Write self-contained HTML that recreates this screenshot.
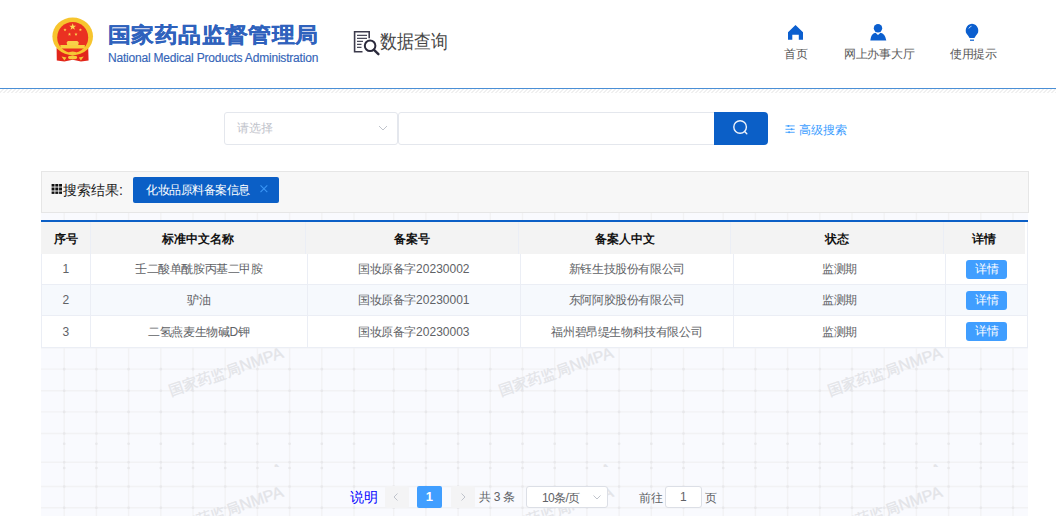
<!DOCTYPE html>
<html><head><meta charset="utf-8">
<style>
*{margin:0;padding:0;box-sizing:border-box;}
html,body{width:1056px;height:516px;overflow:hidden;background:#fff;font-family:"Liberation Sans",sans-serif;}
.abs{position:absolute;}
.t{position:absolute;white-space:nowrap;line-height:1;}
#hdrline{position:absolute;left:0;top:88px;width:1056px;height:1px;background:#4a8fd6;}
#hatch{position:absolute;left:0;top:89px;width:1056px;height:4px;background:repeating-linear-gradient(135deg,#fff 0,#fff 1.5px,#f0f0f0 1.5px,#f0f0f0 2.83px);}
.navtxt{position:absolute;font-size:12px;color:#5a5a5a;letter-spacing:-0.3px;white-space:nowrap;line-height:1;}
.sel{position:absolute;left:224px;top:112px;width:174px;height:33px;border:1px solid #e4e7ed;border-radius:3px;background:#fff;}
.inp{position:absolute;left:398px;top:112px;width:318px;height:33px;border:1px solid #e4e7ed;border-radius:3px 0 0 3px;background:#fff;}
.sbtn{position:absolute;left:714px;top:112px;width:54px;height:33px;background:#0b5fc7;border-radius:0 4px 4px 0;}
#resbar{position:absolute;left:41px;top:171px;width:988px;height:42px;background:#f7f7f7;border:1px solid #e6e6e6;}
.wm{position:absolute;-webkit-text-stroke:0.3px #e3e4e8;white-space:nowrap;line-height:16px;font-size:14.5px;color:#e3e4e8;transform:rotate(-19deg);transform-origin:60px 8px;width:120px;text-align:center;}
.th{position:absolute;top:222px;height:31.5px;line-height:34px;text-align:center;font-size:12px;font-weight:bold;color:#111;white-space:nowrap;}
.td{position:absolute;text-align:center;font-size:12px;line-height:12px;color:#606266;white-space:nowrap;letter-spacing:-0.4px;}
.dbtn{position:absolute;width:41px;height:18.6px;line-height:18.6px;background:#409eff;border-radius:3px;color:#fff;font-size:12px;text-align:center;}

</style></head>
<body>
<!-- emblem -->
<svg class="abs" style="left:48px;top:14px" width="50" height="50" viewBox="0 0 50 50">
  <path d="M8.6 34 L14 36.5 L24.7 40.5 L35.4 36.5 L40.2 34 L40.6 46.6 L33 47.6 L24.7 45.8 L16.4 47.6 L8.8 46.6 Z" fill="#e2261b"/>
  <ellipse cx="24.7" cy="22.4" rx="20.3" ry="18.9" fill="#f7c52e"/>
  <ellipse cx="24.7" cy="23.4" rx="15.5" ry="15.4" fill="#ea3121"/>
  <path d="M18.6 28.6 L19.8 26.9 L29.4 26.9 L30.8 28.6 L30.2 31.1 L19.2 31.1 Z" fill="#f8d04a"/>
  <path d="M12.3 31 L36.9 31 L36.7 34.6 L12.5 34.6 Z" fill="#f8cf3e"/>
  <ellipse cx="24.6" cy="39.3" rx="3.8" ry="1.9" fill="#f5c536"/>
  <ellipse cx="24.6" cy="43.4" rx="4.6" ry="1.9" fill="#f7cb3a"/>
  <path d="M13.5 42.6 L18.5 43.4 L16.4 46.5 Z M35.8 42.6 L30.8 43.4 L32.9 46.5 Z" fill="#f5c536"/>
  <polygon points="24.70,9.20 25.55,11.63 28.12,11.69 26.08,13.25 26.82,15.71 24.70,14.25 22.58,15.71 23.32,13.25 21.28,11.69 23.85,11.63" fill="#fbdc55"/>
  <polygon points="17.00,14.20 17.41,15.33 18.62,15.37 17.67,16.12 18.00,17.28 17.00,16.60 16.00,17.28 16.33,16.12 15.38,15.37 16.59,15.33" fill="#fbd84c"/>
  <polygon points="32.40,14.20 32.81,15.33 34.02,15.37 33.07,16.12 33.40,17.28 32.40,16.60 31.40,17.28 31.73,16.12 30.78,15.37 31.99,15.33" fill="#fbd84c"/>
  <polygon points="21.50,18.60 21.91,19.73 23.12,19.77 22.17,20.52 22.50,21.68 21.50,21.00 20.50,21.68 20.83,20.52 19.88,19.77 21.09,19.73" fill="#fbd84c"/>
  <polygon points="28.00,18.60 28.41,19.73 29.62,19.77 28.67,20.52 29.00,21.68 28.00,21.00 27.00,21.68 27.33,20.52 26.38,19.77 27.59,19.73" fill="#fbd84c"/>
</svg>
<div class="t" style="left:108px;top:25px;font-size:23px;font-weight:bold;-webkit-text-stroke:0.3px #2f62bd;color:#2f62bd;letter-spacing:0.4px;transform:scaleY(0.92);transform-origin:0 0;">国家药品监督管理局</div>
<div class="t" style="left:108px;top:52px;font-size:12px;color:#3565b8;letter-spacing:-0.2px;-webkit-text-stroke:0.15px #3565b8;">National Medical Products Administration</div>

<!-- data query -->
<svg class="abs" style="left:350px;top:26px" width="34" height="34" viewBox="0 0 34 34">
  <path d="M12.5 25.8 L4.6 25.8 L4.6 5.7 L19.2 5.7 L19.2 12.2" fill="none" stroke="#3c3b4c" stroke-width="1.6"/>
  <path d="M7 9.3 H17 M7 12.3 H17 M7 15.3 H13 M7 18.4 H11.5 M7 21.4 H11.5" stroke="#4a4a5a" stroke-width="1.2"/>
  <circle cx="20.1" cy="19.8" r="5.3" fill="none" stroke="#2b2a3c" stroke-width="2"/>
  <path d="M24 23.8 L28.4 28.2" stroke="#2b2a3c" stroke-width="2.4" stroke-linecap="round"/>
</svg>
<div class="t" style="left:380px;top:32px;font-size:19px;color:#444;transform:scaleX(0.89);transform-origin:0 0;">数据查询</div>

<!-- nav -->
<svg class="abs" style="left:786px;top:23px" width="20" height="20" viewBox="0 0 20 20">
  <path d="M2 9.2 L9.5 2 L17 9.2 L17 16.8 L12.8 16.8 L12.8 11.8 L6.3 11.8 L6.3 16.8 L2 16.8 Z" fill="#0b5fcf"/>
</svg>
<div class="navtxt" style="left:784px;top:48px;">首页</div>
<svg class="abs" style="left:868px;top:22px" width="20" height="20" viewBox="0 0 20 20">
  <circle cx="10" cy="6.2" r="4.2" fill="#0b5fcf"/>
  <path d="M2.3 18.4 Q3 11.5 7.5 10.8 L10 13 L12.5 10.8 Q17 11.5 18.3 18.4 Z" fill="#0b5fcf"/>
</svg>
<div class="navtxt" style="left:844px;top:48px;">网上办事大厅</div>
<svg class="abs" style="left:962px;top:21px" width="20" height="22" viewBox="0 0 20 22">
  <path d="M10 2.8 A6.7 6.7 0 0 1 14 14.5 L12.4 17 L7.6 17 L6 14.5 A6.7 6.7 0 0 1 10 2.8 Z" fill="#0b5fcf"/>
  <path d="M8 19.2 H12" stroke="#0b5fcf" stroke-width="1.2"/>
  <path d="M6.8 7.5 A4 4 0 0 1 9.5 5.2" fill="none" stroke="#cfe0f7" stroke-width="0.9"/>
</svg>
<div class="navtxt" style="left:950px;top:48px;">使用提示</div>

<div id="hdrline"></div>
<div id="hatch"></div>

<!-- search -->
<div class="sel"></div>
<div class="t" style="left:237px;top:122px;font-size:12px;color:#bfc3cb;">请选择</div>
<svg class="abs" style="left:377px;top:122px" width="12" height="12" viewBox="0 0 12 12"><path d="M2 4 L6 8 L10 4" fill="none" stroke="#c0c4cc" stroke-width="1"/></svg>
<div class="inp"></div>
<div class="sbtn"></div>
<svg class="abs" style="left:730px;top:117px" width="20" height="20" viewBox="0 0 20 20">
  <circle cx="10.1" cy="10" r="6.3" fill="none" stroke="#eef3fb" stroke-width="1.4"/>
  <path d="M14.6 14.6 L16.8 16.8" stroke="#eef3fb" stroke-width="1.4" stroke-linecap="round"/>
</svg>
<svg class="abs" style="left:785px;top:124px" width="11" height="10" viewBox="0 0 11 10">
  <path d="M0.5 1.9 H9.7 M0.5 5.3 H9.7 M0.5 8.3 H9.7" stroke="#409eff" stroke-width="0.9"/>
  <circle cx="3.4" cy="1.9" r="1" fill="#409eff"/><circle cx="6.6" cy="5.3" r="1" fill="#409eff"/><circle cx="4.1" cy="8.3" r="1" fill="#409eff"/>
</svg>
<div class="t" style="left:799px;top:123.5px;font-size:12px;color:#409eff;">高级搜索</div>

<!-- results bar -->
<div id="resbar"></div>
<svg class="abs" style="left:51px;top:183px" width="12" height="12" viewBox="0 0 12 12"><g fill="#111"><rect x="0.6" y="1" width="2.9" height="2.6"/><rect x="4.3" y="1" width="3" height="2.6"/><rect x="8.1" y="1" width="2.9" height="2.6"/><rect x="0.6" y="4.5" width="2.9" height="3"/><rect x="4.3" y="4.5" width="3" height="3"/><rect x="8.1" y="4.5" width="2.9" height="3"/><rect x="0.6" y="8.5" width="2.9" height="2.4"/><rect x="4.3" y="8.5" width="3" height="2.4"/><rect x="8.1" y="8.5" width="2.9" height="2.4"/></g></svg>
<div class="t" style="left:63px;top:183px;font-size:14px;color:#222;">搜索结果:</div>
<div class="abs" style="left:133px;top:177px;width:146px;height:26px;background:#0b5fc6;border-radius:2px;"></div>
<div class="t" style="left:146px;top:184px;font-size:12px;color:#fff;letter-spacing:-0.45px;">化妆品原料备案信息</div>
<svg class="abs" style="left:259px;top:184px" width="10" height="10" viewBox="0 0 10 10"><path d="M1.5 1.3 L8.3 8.1 M8.3 1.3 L1.5 8.1" stroke="#3a95f5" stroke-width="1.1"/></svg>

<div class="abs" style="left:41px;top:213px;width:987px;height:303px;background:#f9fafe;"></div>
<svg class="abs" style="left:41px;top:213px" width="987" height="303" viewBox="0 1 987 303"><g stroke="#f2f2f4" stroke-width="1.4"><path d="M23.2 0V304"/><path d="M55.4 0V304"/><path d="M87.6 0V304"/><path d="M119.8 0V304"/><path d="M152.0 0V304"/><path d="M184.2 0V304"/><path d="M216.4 0V304"/><path d="M248.6 0V304"/><path d="M280.8 0V304"/><path d="M313.0 0V304"/><path d="M352.7 0V304"/><path d="M384.9 0V304"/><path d="M417.1 0V304"/><path d="M449.3 0V304"/><path d="M481.5 0V304"/><path d="M513.7 0V304"/><path d="M545.9 0V304"/><path d="M578.1 0V304"/><path d="M610.3 0V304"/><path d="M642.5 0V304"/><path d="M682.2 0V304"/><path d="M714.4 0V304"/><path d="M746.6 0V304"/><path d="M778.8 0V304"/><path d="M811.0 0V304"/><path d="M843.2 0V304"/><path d="M875.4 0V304"/><path d="M907.6 0V304"/><path d="M939.8 0V304"/><path d="M972.0 0V304"/><path d="M0 18.5H987"/><path d="M0 40.1H987"/><path d="M0 61.3H987"/><path d="M0 82.9H987"/><path d="M0 111.7H987"/><path d="M0 135.9H987"/><path d="M0 157.1H987"/><path d="M0 178.7H987"/><path d="M0 199.9H987"/><path d="M0 221.5H987"/><path d="M0 250.3H987"/><path d="M0 274.5H987"/><path d="M0 295.7H987"/></g><g fill="#e8e8eb"><rect x="21.9" y="17.2" width="2.6" height="2.6" rx="1"/><rect x="21.9" y="38.8" width="2.6" height="2.6" rx="1"/><rect x="21.9" y="60.0" width="2.6" height="2.6" rx="1"/><rect x="21.9" y="81.6" width="2.6" height="2.6" rx="1"/><rect x="21.9" y="110.4" width="2.6" height="2.6" rx="1"/><rect x="21.9" y="155.8" width="2.6" height="2.6" rx="1"/><rect x="21.9" y="177.4" width="2.6" height="2.6" rx="1"/><rect x="21.9" y="198.6" width="2.6" height="2.6" rx="1"/><rect x="21.9" y="220.2" width="2.6" height="2.6" rx="1"/><rect x="21.9" y="249.0" width="2.6" height="2.6" rx="1"/><rect x="21.9" y="273.2" width="2.6" height="2.6" rx="1"/><rect x="21.9" y="294.4" width="2.6" height="2.6" rx="1"/><rect x="21.9" y="230.5" width="2.6" height="2.6" rx="1"/><rect x="21.9" y="254.7" width="2.6" height="2.6" rx="1"/><rect x="54.1" y="17.2" width="2.6" height="2.6" rx="1"/><rect x="54.1" y="38.8" width="2.6" height="2.6" rx="1"/><rect x="54.1" y="60.0" width="2.6" height="2.6" rx="1"/><rect x="54.1" y="81.6" width="2.6" height="2.6" rx="1"/><rect x="54.1" y="110.4" width="2.6" height="2.6" rx="1"/><rect x="54.1" y="155.8" width="2.6" height="2.6" rx="1"/><rect x="54.1" y="177.4" width="2.6" height="2.6" rx="1"/><rect x="54.1" y="198.6" width="2.6" height="2.6" rx="1"/><rect x="54.1" y="220.2" width="2.6" height="2.6" rx="1"/><rect x="54.1" y="249.0" width="2.6" height="2.6" rx="1"/><rect x="54.1" y="273.2" width="2.6" height="2.6" rx="1"/><rect x="54.1" y="294.4" width="2.6" height="2.6" rx="1"/><rect x="54.1" y="230.5" width="2.6" height="2.6" rx="1"/><rect x="54.1" y="254.7" width="2.6" height="2.6" rx="1"/><rect x="86.3" y="17.2" width="2.6" height="2.6" rx="1"/><rect x="86.3" y="38.8" width="2.6" height="2.6" rx="1"/><rect x="86.3" y="60.0" width="2.6" height="2.6" rx="1"/><rect x="86.3" y="81.6" width="2.6" height="2.6" rx="1"/><rect x="86.3" y="110.4" width="2.6" height="2.6" rx="1"/><rect x="86.3" y="155.8" width="2.6" height="2.6" rx="1"/><rect x="86.3" y="177.4" width="2.6" height="2.6" rx="1"/><rect x="86.3" y="198.6" width="2.6" height="2.6" rx="1"/><rect x="86.3" y="220.2" width="2.6" height="2.6" rx="1"/><rect x="86.3" y="249.0" width="2.6" height="2.6" rx="1"/><rect x="86.3" y="273.2" width="2.6" height="2.6" rx="1"/><rect x="86.3" y="294.4" width="2.6" height="2.6" rx="1"/><rect x="86.3" y="230.5" width="2.6" height="2.6" rx="1"/><rect x="86.3" y="254.7" width="2.6" height="2.6" rx="1"/><rect x="118.5" y="17.2" width="2.6" height="2.6" rx="1"/><rect x="118.5" y="38.8" width="2.6" height="2.6" rx="1"/><rect x="118.5" y="60.0" width="2.6" height="2.6" rx="1"/><rect x="118.5" y="81.6" width="2.6" height="2.6" rx="1"/><rect x="118.5" y="110.4" width="2.6" height="2.6" rx="1"/><rect x="118.5" y="155.8" width="2.6" height="2.6" rx="1"/><rect x="118.5" y="177.4" width="2.6" height="2.6" rx="1"/><rect x="118.5" y="198.6" width="2.6" height="2.6" rx="1"/><rect x="118.5" y="220.2" width="2.6" height="2.6" rx="1"/><rect x="118.5" y="249.0" width="2.6" height="2.6" rx="1"/><rect x="118.5" y="273.2" width="2.6" height="2.6" rx="1"/><rect x="118.5" y="294.4" width="2.6" height="2.6" rx="1"/><rect x="118.5" y="230.5" width="2.6" height="2.6" rx="1"/><rect x="118.5" y="254.7" width="2.6" height="2.6" rx="1"/><rect x="150.7" y="17.2" width="2.6" height="2.6" rx="1"/><rect x="150.7" y="38.8" width="2.6" height="2.6" rx="1"/><rect x="150.7" y="60.0" width="2.6" height="2.6" rx="1"/><rect x="150.7" y="81.6" width="2.6" height="2.6" rx="1"/><rect x="150.7" y="110.4" width="2.6" height="2.6" rx="1"/><rect x="150.7" y="155.8" width="2.6" height="2.6" rx="1"/><rect x="150.7" y="177.4" width="2.6" height="2.6" rx="1"/><rect x="150.7" y="198.6" width="2.6" height="2.6" rx="1"/><rect x="150.7" y="220.2" width="2.6" height="2.6" rx="1"/><rect x="150.7" y="249.0" width="2.6" height="2.6" rx="1"/><rect x="150.7" y="273.2" width="2.6" height="2.6" rx="1"/><rect x="150.7" y="294.4" width="2.6" height="2.6" rx="1"/><rect x="150.7" y="230.5" width="2.6" height="2.6" rx="1"/><rect x="150.7" y="254.7" width="2.6" height="2.6" rx="1"/><rect x="182.9" y="17.2" width="2.6" height="2.6" rx="1"/><rect x="182.9" y="38.8" width="2.6" height="2.6" rx="1"/><rect x="182.9" y="60.0" width="2.6" height="2.6" rx="1"/><rect x="182.9" y="81.6" width="2.6" height="2.6" rx="1"/><rect x="182.9" y="110.4" width="2.6" height="2.6" rx="1"/><rect x="182.9" y="155.8" width="2.6" height="2.6" rx="1"/><rect x="182.9" y="177.4" width="2.6" height="2.6" rx="1"/><rect x="182.9" y="198.6" width="2.6" height="2.6" rx="1"/><rect x="182.9" y="220.2" width="2.6" height="2.6" rx="1"/><rect x="182.9" y="249.0" width="2.6" height="2.6" rx="1"/><rect x="182.9" y="273.2" width="2.6" height="2.6" rx="1"/><rect x="182.9" y="294.4" width="2.6" height="2.6" rx="1"/><rect x="182.9" y="230.5" width="2.6" height="2.6" rx="1"/><rect x="182.9" y="254.7" width="2.6" height="2.6" rx="1"/><rect x="215.1" y="17.2" width="2.6" height="2.6" rx="1"/><rect x="215.1" y="38.8" width="2.6" height="2.6" rx="1"/><rect x="215.1" y="60.0" width="2.6" height="2.6" rx="1"/><rect x="215.1" y="81.6" width="2.6" height="2.6" rx="1"/><rect x="215.1" y="110.4" width="2.6" height="2.6" rx="1"/><rect x="215.1" y="155.8" width="2.6" height="2.6" rx="1"/><rect x="215.1" y="177.4" width="2.6" height="2.6" rx="1"/><rect x="215.1" y="198.6" width="2.6" height="2.6" rx="1"/><rect x="215.1" y="220.2" width="2.6" height="2.6" rx="1"/><rect x="215.1" y="249.0" width="2.6" height="2.6" rx="1"/><rect x="215.1" y="273.2" width="2.6" height="2.6" rx="1"/><rect x="215.1" y="294.4" width="2.6" height="2.6" rx="1"/><rect x="215.1" y="230.5" width="2.6" height="2.6" rx="1"/><rect x="215.1" y="254.7" width="2.6" height="2.6" rx="1"/><rect x="247.3" y="17.2" width="2.6" height="2.6" rx="1"/><rect x="247.3" y="38.8" width="2.6" height="2.6" rx="1"/><rect x="247.3" y="60.0" width="2.6" height="2.6" rx="1"/><rect x="247.3" y="81.6" width="2.6" height="2.6" rx="1"/><rect x="247.3" y="110.4" width="2.6" height="2.6" rx="1"/><rect x="247.3" y="155.8" width="2.6" height="2.6" rx="1"/><rect x="247.3" y="177.4" width="2.6" height="2.6" rx="1"/><rect x="247.3" y="198.6" width="2.6" height="2.6" rx="1"/><rect x="247.3" y="220.2" width="2.6" height="2.6" rx="1"/><rect x="247.3" y="249.0" width="2.6" height="2.6" rx="1"/><rect x="247.3" y="273.2" width="2.6" height="2.6" rx="1"/><rect x="247.3" y="294.4" width="2.6" height="2.6" rx="1"/><rect x="247.3" y="230.5" width="2.6" height="2.6" rx="1"/><rect x="247.3" y="254.7" width="2.6" height="2.6" rx="1"/><rect x="279.5" y="17.2" width="2.6" height="2.6" rx="1"/><rect x="279.5" y="38.8" width="2.6" height="2.6" rx="1"/><rect x="279.5" y="60.0" width="2.6" height="2.6" rx="1"/><rect x="279.5" y="81.6" width="2.6" height="2.6" rx="1"/><rect x="279.5" y="110.4" width="2.6" height="2.6" rx="1"/><rect x="279.5" y="155.8" width="2.6" height="2.6" rx="1"/><rect x="279.5" y="177.4" width="2.6" height="2.6" rx="1"/><rect x="279.5" y="198.6" width="2.6" height="2.6" rx="1"/><rect x="279.5" y="220.2" width="2.6" height="2.6" rx="1"/><rect x="279.5" y="249.0" width="2.6" height="2.6" rx="1"/><rect x="279.5" y="273.2" width="2.6" height="2.6" rx="1"/><rect x="279.5" y="294.4" width="2.6" height="2.6" rx="1"/><rect x="279.5" y="230.5" width="2.6" height="2.6" rx="1"/><rect x="279.5" y="254.7" width="2.6" height="2.6" rx="1"/><rect x="311.7" y="17.2" width="2.6" height="2.6" rx="1"/><rect x="311.7" y="38.8" width="2.6" height="2.6" rx="1"/><rect x="311.7" y="60.0" width="2.6" height="2.6" rx="1"/><rect x="311.7" y="81.6" width="2.6" height="2.6" rx="1"/><rect x="311.7" y="110.4" width="2.6" height="2.6" rx="1"/><rect x="311.7" y="155.8" width="2.6" height="2.6" rx="1"/><rect x="311.7" y="177.4" width="2.6" height="2.6" rx="1"/><rect x="311.7" y="198.6" width="2.6" height="2.6" rx="1"/><rect x="311.7" y="220.2" width="2.6" height="2.6" rx="1"/><rect x="311.7" y="249.0" width="2.6" height="2.6" rx="1"/><rect x="311.7" y="273.2" width="2.6" height="2.6" rx="1"/><rect x="311.7" y="294.4" width="2.6" height="2.6" rx="1"/><rect x="311.7" y="230.5" width="2.6" height="2.6" rx="1"/><rect x="311.7" y="254.7" width="2.6" height="2.6" rx="1"/><rect x="351.4" y="17.2" width="2.6" height="2.6" rx="1"/><rect x="351.4" y="38.8" width="2.6" height="2.6" rx="1"/><rect x="351.4" y="60.0" width="2.6" height="2.6" rx="1"/><rect x="351.4" y="81.6" width="2.6" height="2.6" rx="1"/><rect x="351.4" y="110.4" width="2.6" height="2.6" rx="1"/><rect x="351.4" y="155.8" width="2.6" height="2.6" rx="1"/><rect x="351.4" y="177.4" width="2.6" height="2.6" rx="1"/><rect x="351.4" y="198.6" width="2.6" height="2.6" rx="1"/><rect x="351.4" y="220.2" width="2.6" height="2.6" rx="1"/><rect x="351.4" y="249.0" width="2.6" height="2.6" rx="1"/><rect x="351.4" y="273.2" width="2.6" height="2.6" rx="1"/><rect x="351.4" y="294.4" width="2.6" height="2.6" rx="1"/><rect x="351.4" y="230.5" width="2.6" height="2.6" rx="1"/><rect x="351.4" y="254.7" width="2.6" height="2.6" rx="1"/><rect x="383.6" y="17.2" width="2.6" height="2.6" rx="1"/><rect x="383.6" y="38.8" width="2.6" height="2.6" rx="1"/><rect x="383.6" y="60.0" width="2.6" height="2.6" rx="1"/><rect x="383.6" y="81.6" width="2.6" height="2.6" rx="1"/><rect x="383.6" y="110.4" width="2.6" height="2.6" rx="1"/><rect x="383.6" y="155.8" width="2.6" height="2.6" rx="1"/><rect x="383.6" y="177.4" width="2.6" height="2.6" rx="1"/><rect x="383.6" y="198.6" width="2.6" height="2.6" rx="1"/><rect x="383.6" y="220.2" width="2.6" height="2.6" rx="1"/><rect x="383.6" y="249.0" width="2.6" height="2.6" rx="1"/><rect x="383.6" y="273.2" width="2.6" height="2.6" rx="1"/><rect x="383.6" y="294.4" width="2.6" height="2.6" rx="1"/><rect x="383.6" y="230.5" width="2.6" height="2.6" rx="1"/><rect x="383.6" y="254.7" width="2.6" height="2.6" rx="1"/><rect x="415.8" y="17.2" width="2.6" height="2.6" rx="1"/><rect x="415.8" y="38.8" width="2.6" height="2.6" rx="1"/><rect x="415.8" y="60.0" width="2.6" height="2.6" rx="1"/><rect x="415.8" y="81.6" width="2.6" height="2.6" rx="1"/><rect x="415.8" y="110.4" width="2.6" height="2.6" rx="1"/><rect x="415.8" y="155.8" width="2.6" height="2.6" rx="1"/><rect x="415.8" y="177.4" width="2.6" height="2.6" rx="1"/><rect x="415.8" y="198.6" width="2.6" height="2.6" rx="1"/><rect x="415.8" y="220.2" width="2.6" height="2.6" rx="1"/><rect x="415.8" y="249.0" width="2.6" height="2.6" rx="1"/><rect x="415.8" y="273.2" width="2.6" height="2.6" rx="1"/><rect x="415.8" y="294.4" width="2.6" height="2.6" rx="1"/><rect x="415.8" y="230.5" width="2.6" height="2.6" rx="1"/><rect x="415.8" y="254.7" width="2.6" height="2.6" rx="1"/><rect x="448.0" y="17.2" width="2.6" height="2.6" rx="1"/><rect x="448.0" y="38.8" width="2.6" height="2.6" rx="1"/><rect x="448.0" y="60.0" width="2.6" height="2.6" rx="1"/><rect x="448.0" y="81.6" width="2.6" height="2.6" rx="1"/><rect x="448.0" y="110.4" width="2.6" height="2.6" rx="1"/><rect x="448.0" y="155.8" width="2.6" height="2.6" rx="1"/><rect x="448.0" y="177.4" width="2.6" height="2.6" rx="1"/><rect x="448.0" y="198.6" width="2.6" height="2.6" rx="1"/><rect x="448.0" y="220.2" width="2.6" height="2.6" rx="1"/><rect x="448.0" y="249.0" width="2.6" height="2.6" rx="1"/><rect x="448.0" y="273.2" width="2.6" height="2.6" rx="1"/><rect x="448.0" y="294.4" width="2.6" height="2.6" rx="1"/><rect x="448.0" y="230.5" width="2.6" height="2.6" rx="1"/><rect x="448.0" y="254.7" width="2.6" height="2.6" rx="1"/><rect x="480.2" y="17.2" width="2.6" height="2.6" rx="1"/><rect x="480.2" y="38.8" width="2.6" height="2.6" rx="1"/><rect x="480.2" y="60.0" width="2.6" height="2.6" rx="1"/><rect x="480.2" y="81.6" width="2.6" height="2.6" rx="1"/><rect x="480.2" y="110.4" width="2.6" height="2.6" rx="1"/><rect x="480.2" y="155.8" width="2.6" height="2.6" rx="1"/><rect x="480.2" y="177.4" width="2.6" height="2.6" rx="1"/><rect x="480.2" y="198.6" width="2.6" height="2.6" rx="1"/><rect x="480.2" y="220.2" width="2.6" height="2.6" rx="1"/><rect x="480.2" y="249.0" width="2.6" height="2.6" rx="1"/><rect x="480.2" y="273.2" width="2.6" height="2.6" rx="1"/><rect x="480.2" y="294.4" width="2.6" height="2.6" rx="1"/><rect x="480.2" y="230.5" width="2.6" height="2.6" rx="1"/><rect x="480.2" y="254.7" width="2.6" height="2.6" rx="1"/><rect x="512.4" y="17.2" width="2.6" height="2.6" rx="1"/><rect x="512.4" y="38.8" width="2.6" height="2.6" rx="1"/><rect x="512.4" y="60.0" width="2.6" height="2.6" rx="1"/><rect x="512.4" y="81.6" width="2.6" height="2.6" rx="1"/><rect x="512.4" y="110.4" width="2.6" height="2.6" rx="1"/><rect x="512.4" y="155.8" width="2.6" height="2.6" rx="1"/><rect x="512.4" y="177.4" width="2.6" height="2.6" rx="1"/><rect x="512.4" y="198.6" width="2.6" height="2.6" rx="1"/><rect x="512.4" y="220.2" width="2.6" height="2.6" rx="1"/><rect x="512.4" y="249.0" width="2.6" height="2.6" rx="1"/><rect x="512.4" y="273.2" width="2.6" height="2.6" rx="1"/><rect x="512.4" y="294.4" width="2.6" height="2.6" rx="1"/><rect x="512.4" y="230.5" width="2.6" height="2.6" rx="1"/><rect x="512.4" y="254.7" width="2.6" height="2.6" rx="1"/><rect x="544.6" y="17.2" width="2.6" height="2.6" rx="1"/><rect x="544.6" y="38.8" width="2.6" height="2.6" rx="1"/><rect x="544.6" y="60.0" width="2.6" height="2.6" rx="1"/><rect x="544.6" y="81.6" width="2.6" height="2.6" rx="1"/><rect x="544.6" y="110.4" width="2.6" height="2.6" rx="1"/><rect x="544.6" y="155.8" width="2.6" height="2.6" rx="1"/><rect x="544.6" y="177.4" width="2.6" height="2.6" rx="1"/><rect x="544.6" y="198.6" width="2.6" height="2.6" rx="1"/><rect x="544.6" y="220.2" width="2.6" height="2.6" rx="1"/><rect x="544.6" y="249.0" width="2.6" height="2.6" rx="1"/><rect x="544.6" y="273.2" width="2.6" height="2.6" rx="1"/><rect x="544.6" y="294.4" width="2.6" height="2.6" rx="1"/><rect x="544.6" y="230.5" width="2.6" height="2.6" rx="1"/><rect x="544.6" y="254.7" width="2.6" height="2.6" rx="1"/><rect x="576.8" y="17.2" width="2.6" height="2.6" rx="1"/><rect x="576.8" y="38.8" width="2.6" height="2.6" rx="1"/><rect x="576.8" y="60.0" width="2.6" height="2.6" rx="1"/><rect x="576.8" y="81.6" width="2.6" height="2.6" rx="1"/><rect x="576.8" y="110.4" width="2.6" height="2.6" rx="1"/><rect x="576.8" y="155.8" width="2.6" height="2.6" rx="1"/><rect x="576.8" y="177.4" width="2.6" height="2.6" rx="1"/><rect x="576.8" y="198.6" width="2.6" height="2.6" rx="1"/><rect x="576.8" y="220.2" width="2.6" height="2.6" rx="1"/><rect x="576.8" y="249.0" width="2.6" height="2.6" rx="1"/><rect x="576.8" y="273.2" width="2.6" height="2.6" rx="1"/><rect x="576.8" y="294.4" width="2.6" height="2.6" rx="1"/><rect x="576.8" y="230.5" width="2.6" height="2.6" rx="1"/><rect x="576.8" y="254.7" width="2.6" height="2.6" rx="1"/><rect x="609.0" y="17.2" width="2.6" height="2.6" rx="1"/><rect x="609.0" y="38.8" width="2.6" height="2.6" rx="1"/><rect x="609.0" y="60.0" width="2.6" height="2.6" rx="1"/><rect x="609.0" y="81.6" width="2.6" height="2.6" rx="1"/><rect x="609.0" y="110.4" width="2.6" height="2.6" rx="1"/><rect x="609.0" y="155.8" width="2.6" height="2.6" rx="1"/><rect x="609.0" y="177.4" width="2.6" height="2.6" rx="1"/><rect x="609.0" y="198.6" width="2.6" height="2.6" rx="1"/><rect x="609.0" y="220.2" width="2.6" height="2.6" rx="1"/><rect x="609.0" y="249.0" width="2.6" height="2.6" rx="1"/><rect x="609.0" y="273.2" width="2.6" height="2.6" rx="1"/><rect x="609.0" y="294.4" width="2.6" height="2.6" rx="1"/><rect x="609.0" y="230.5" width="2.6" height="2.6" rx="1"/><rect x="609.0" y="254.7" width="2.6" height="2.6" rx="1"/><rect x="641.2" y="17.2" width="2.6" height="2.6" rx="1"/><rect x="641.2" y="38.8" width="2.6" height="2.6" rx="1"/><rect x="641.2" y="60.0" width="2.6" height="2.6" rx="1"/><rect x="641.2" y="81.6" width="2.6" height="2.6" rx="1"/><rect x="641.2" y="110.4" width="2.6" height="2.6" rx="1"/><rect x="641.2" y="155.8" width="2.6" height="2.6" rx="1"/><rect x="641.2" y="177.4" width="2.6" height="2.6" rx="1"/><rect x="641.2" y="198.6" width="2.6" height="2.6" rx="1"/><rect x="641.2" y="220.2" width="2.6" height="2.6" rx="1"/><rect x="641.2" y="249.0" width="2.6" height="2.6" rx="1"/><rect x="641.2" y="273.2" width="2.6" height="2.6" rx="1"/><rect x="641.2" y="294.4" width="2.6" height="2.6" rx="1"/><rect x="641.2" y="230.5" width="2.6" height="2.6" rx="1"/><rect x="641.2" y="254.7" width="2.6" height="2.6" rx="1"/><rect x="680.9" y="17.2" width="2.6" height="2.6" rx="1"/><rect x="680.9" y="38.8" width="2.6" height="2.6" rx="1"/><rect x="680.9" y="60.0" width="2.6" height="2.6" rx="1"/><rect x="680.9" y="81.6" width="2.6" height="2.6" rx="1"/><rect x="680.9" y="110.4" width="2.6" height="2.6" rx="1"/><rect x="680.9" y="155.8" width="2.6" height="2.6" rx="1"/><rect x="680.9" y="177.4" width="2.6" height="2.6" rx="1"/><rect x="680.9" y="198.6" width="2.6" height="2.6" rx="1"/><rect x="680.9" y="220.2" width="2.6" height="2.6" rx="1"/><rect x="680.9" y="249.0" width="2.6" height="2.6" rx="1"/><rect x="680.9" y="273.2" width="2.6" height="2.6" rx="1"/><rect x="680.9" y="294.4" width="2.6" height="2.6" rx="1"/><rect x="680.9" y="230.5" width="2.6" height="2.6" rx="1"/><rect x="680.9" y="254.7" width="2.6" height="2.6" rx="1"/><rect x="713.1" y="17.2" width="2.6" height="2.6" rx="1"/><rect x="713.1" y="38.8" width="2.6" height="2.6" rx="1"/><rect x="713.1" y="60.0" width="2.6" height="2.6" rx="1"/><rect x="713.1" y="81.6" width="2.6" height="2.6" rx="1"/><rect x="713.1" y="110.4" width="2.6" height="2.6" rx="1"/><rect x="713.1" y="155.8" width="2.6" height="2.6" rx="1"/><rect x="713.1" y="177.4" width="2.6" height="2.6" rx="1"/><rect x="713.1" y="198.6" width="2.6" height="2.6" rx="1"/><rect x="713.1" y="220.2" width="2.6" height="2.6" rx="1"/><rect x="713.1" y="249.0" width="2.6" height="2.6" rx="1"/><rect x="713.1" y="273.2" width="2.6" height="2.6" rx="1"/><rect x="713.1" y="294.4" width="2.6" height="2.6" rx="1"/><rect x="713.1" y="230.5" width="2.6" height="2.6" rx="1"/><rect x="713.1" y="254.7" width="2.6" height="2.6" rx="1"/><rect x="745.3" y="17.2" width="2.6" height="2.6" rx="1"/><rect x="745.3" y="38.8" width="2.6" height="2.6" rx="1"/><rect x="745.3" y="60.0" width="2.6" height="2.6" rx="1"/><rect x="745.3" y="81.6" width="2.6" height="2.6" rx="1"/><rect x="745.3" y="110.4" width="2.6" height="2.6" rx="1"/><rect x="745.3" y="155.8" width="2.6" height="2.6" rx="1"/><rect x="745.3" y="177.4" width="2.6" height="2.6" rx="1"/><rect x="745.3" y="198.6" width="2.6" height="2.6" rx="1"/><rect x="745.3" y="220.2" width="2.6" height="2.6" rx="1"/><rect x="745.3" y="249.0" width="2.6" height="2.6" rx="1"/><rect x="745.3" y="273.2" width="2.6" height="2.6" rx="1"/><rect x="745.3" y="294.4" width="2.6" height="2.6" rx="1"/><rect x="745.3" y="230.5" width="2.6" height="2.6" rx="1"/><rect x="745.3" y="254.7" width="2.6" height="2.6" rx="1"/><rect x="777.5" y="17.2" width="2.6" height="2.6" rx="1"/><rect x="777.5" y="38.8" width="2.6" height="2.6" rx="1"/><rect x="777.5" y="60.0" width="2.6" height="2.6" rx="1"/><rect x="777.5" y="81.6" width="2.6" height="2.6" rx="1"/><rect x="777.5" y="110.4" width="2.6" height="2.6" rx="1"/><rect x="777.5" y="155.8" width="2.6" height="2.6" rx="1"/><rect x="777.5" y="177.4" width="2.6" height="2.6" rx="1"/><rect x="777.5" y="198.6" width="2.6" height="2.6" rx="1"/><rect x="777.5" y="220.2" width="2.6" height="2.6" rx="1"/><rect x="777.5" y="249.0" width="2.6" height="2.6" rx="1"/><rect x="777.5" y="273.2" width="2.6" height="2.6" rx="1"/><rect x="777.5" y="294.4" width="2.6" height="2.6" rx="1"/><rect x="777.5" y="230.5" width="2.6" height="2.6" rx="1"/><rect x="777.5" y="254.7" width="2.6" height="2.6" rx="1"/><rect x="809.7" y="17.2" width="2.6" height="2.6" rx="1"/><rect x="809.7" y="38.8" width="2.6" height="2.6" rx="1"/><rect x="809.7" y="60.0" width="2.6" height="2.6" rx="1"/><rect x="809.7" y="81.6" width="2.6" height="2.6" rx="1"/><rect x="809.7" y="110.4" width="2.6" height="2.6" rx="1"/><rect x="809.7" y="155.8" width="2.6" height="2.6" rx="1"/><rect x="809.7" y="177.4" width="2.6" height="2.6" rx="1"/><rect x="809.7" y="198.6" width="2.6" height="2.6" rx="1"/><rect x="809.7" y="220.2" width="2.6" height="2.6" rx="1"/><rect x="809.7" y="249.0" width="2.6" height="2.6" rx="1"/><rect x="809.7" y="273.2" width="2.6" height="2.6" rx="1"/><rect x="809.7" y="294.4" width="2.6" height="2.6" rx="1"/><rect x="809.7" y="230.5" width="2.6" height="2.6" rx="1"/><rect x="809.7" y="254.7" width="2.6" height="2.6" rx="1"/><rect x="841.9" y="17.2" width="2.6" height="2.6" rx="1"/><rect x="841.9" y="38.8" width="2.6" height="2.6" rx="1"/><rect x="841.9" y="60.0" width="2.6" height="2.6" rx="1"/><rect x="841.9" y="81.6" width="2.6" height="2.6" rx="1"/><rect x="841.9" y="110.4" width="2.6" height="2.6" rx="1"/><rect x="841.9" y="155.8" width="2.6" height="2.6" rx="1"/><rect x="841.9" y="177.4" width="2.6" height="2.6" rx="1"/><rect x="841.9" y="198.6" width="2.6" height="2.6" rx="1"/><rect x="841.9" y="220.2" width="2.6" height="2.6" rx="1"/><rect x="841.9" y="249.0" width="2.6" height="2.6" rx="1"/><rect x="841.9" y="273.2" width="2.6" height="2.6" rx="1"/><rect x="841.9" y="294.4" width="2.6" height="2.6" rx="1"/><rect x="841.9" y="230.5" width="2.6" height="2.6" rx="1"/><rect x="841.9" y="254.7" width="2.6" height="2.6" rx="1"/><rect x="874.1" y="17.2" width="2.6" height="2.6" rx="1"/><rect x="874.1" y="38.8" width="2.6" height="2.6" rx="1"/><rect x="874.1" y="60.0" width="2.6" height="2.6" rx="1"/><rect x="874.1" y="81.6" width="2.6" height="2.6" rx="1"/><rect x="874.1" y="110.4" width="2.6" height="2.6" rx="1"/><rect x="874.1" y="155.8" width="2.6" height="2.6" rx="1"/><rect x="874.1" y="177.4" width="2.6" height="2.6" rx="1"/><rect x="874.1" y="198.6" width="2.6" height="2.6" rx="1"/><rect x="874.1" y="220.2" width="2.6" height="2.6" rx="1"/><rect x="874.1" y="249.0" width="2.6" height="2.6" rx="1"/><rect x="874.1" y="273.2" width="2.6" height="2.6" rx="1"/><rect x="874.1" y="294.4" width="2.6" height="2.6" rx="1"/><rect x="874.1" y="230.5" width="2.6" height="2.6" rx="1"/><rect x="874.1" y="254.7" width="2.6" height="2.6" rx="1"/><rect x="906.3" y="17.2" width="2.6" height="2.6" rx="1"/><rect x="906.3" y="38.8" width="2.6" height="2.6" rx="1"/><rect x="906.3" y="60.0" width="2.6" height="2.6" rx="1"/><rect x="906.3" y="81.6" width="2.6" height="2.6" rx="1"/><rect x="906.3" y="110.4" width="2.6" height="2.6" rx="1"/><rect x="906.3" y="155.8" width="2.6" height="2.6" rx="1"/><rect x="906.3" y="177.4" width="2.6" height="2.6" rx="1"/><rect x="906.3" y="198.6" width="2.6" height="2.6" rx="1"/><rect x="906.3" y="220.2" width="2.6" height="2.6" rx="1"/><rect x="906.3" y="249.0" width="2.6" height="2.6" rx="1"/><rect x="906.3" y="273.2" width="2.6" height="2.6" rx="1"/><rect x="906.3" y="294.4" width="2.6" height="2.6" rx="1"/><rect x="906.3" y="230.5" width="2.6" height="2.6" rx="1"/><rect x="906.3" y="254.7" width="2.6" height="2.6" rx="1"/><rect x="938.5" y="17.2" width="2.6" height="2.6" rx="1"/><rect x="938.5" y="38.8" width="2.6" height="2.6" rx="1"/><rect x="938.5" y="60.0" width="2.6" height="2.6" rx="1"/><rect x="938.5" y="81.6" width="2.6" height="2.6" rx="1"/><rect x="938.5" y="110.4" width="2.6" height="2.6" rx="1"/><rect x="938.5" y="155.8" width="2.6" height="2.6" rx="1"/><rect x="938.5" y="177.4" width="2.6" height="2.6" rx="1"/><rect x="938.5" y="198.6" width="2.6" height="2.6" rx="1"/><rect x="938.5" y="220.2" width="2.6" height="2.6" rx="1"/><rect x="938.5" y="249.0" width="2.6" height="2.6" rx="1"/><rect x="938.5" y="273.2" width="2.6" height="2.6" rx="1"/><rect x="938.5" y="294.4" width="2.6" height="2.6" rx="1"/><rect x="938.5" y="230.5" width="2.6" height="2.6" rx="1"/><rect x="938.5" y="254.7" width="2.6" height="2.6" rx="1"/><rect x="970.7" y="17.2" width="2.6" height="2.6" rx="1"/><rect x="970.7" y="38.8" width="2.6" height="2.6" rx="1"/><rect x="970.7" y="60.0" width="2.6" height="2.6" rx="1"/><rect x="970.7" y="81.6" width="2.6" height="2.6" rx="1"/><rect x="970.7" y="110.4" width="2.6" height="2.6" rx="1"/><rect x="970.7" y="155.8" width="2.6" height="2.6" rx="1"/><rect x="970.7" y="177.4" width="2.6" height="2.6" rx="1"/><rect x="970.7" y="198.6" width="2.6" height="2.6" rx="1"/><rect x="970.7" y="220.2" width="2.6" height="2.6" rx="1"/><rect x="970.7" y="249.0" width="2.6" height="2.6" rx="1"/><rect x="970.7" y="273.2" width="2.6" height="2.6" rx="1"/><rect x="970.7" y="294.4" width="2.6" height="2.6" rx="1"/><rect x="970.7" y="230.5" width="2.6" height="2.6" rx="1"/><rect x="970.7" y="254.7" width="2.6" height="2.6" rx="1"/></g></svg>
<div class="wm" style="left:166.0px;top:364.3px;">国家药监局<span style="font-size:16px">NMPA</span></div>
<div class="wm" style="left:495.5px;top:364.3px;">国家药监局<span style="font-size:16px">NMPA</span></div>
<div class="wm" style="left:825.0px;top:364.3px;">国家药监局<span style="font-size:16px">NMPA</span></div>
<div class="wm" style="left:166.0px;top:502.9px;">国家药监局<span style="font-size:16px">NMPA</span></div>
<div class="wm" style="left:495.5px;top:502.9px;">国家药监局<span style="font-size:16px">NMPA</span></div>
<div class="wm" style="left:825.0px;top:502.9px;">国家药监局<span style="font-size:16px">NMPA</span></div>
<div class="abs" style="left:41px;top:347px;width:987px;height:120px;overflow:hidden;"><div class="wm" style="left:124.8px;top:133.1px;">国家药监局<span style="font-size:16px">NMPA</span></div><div class="wm" style="left:454.3px;top:133.1px;">国家药监局<span style="font-size:16px">NMPA</span></div><div class="wm" style="left:783.8px;top:133.1px;">国家药监局<span style="font-size:16px">NMPA</span></div></div>
<div class="abs" style="left:41px;top:220px;width:987px;height:2px;background:#0b5fc6;"></div>
<div class="abs" style="left:41px;top:222px;width:987px;height:126px;background:#fff;border:1px solid #ebeef5;border-top:0;"></div>
<div class="abs" style="left:41px;top:222px;width:984px;height:31.5px;background:#f3f3f3;"></div>
<div class="th" style="left:41.0px;width:49.0px;">序号</div>
<div class="th" style="left:90.0px;width:215.7px;">标准中文名称</div>
<div class="abs" style="left:89.5px;top:222px;width:1px;height:31.5px;background:#ebeef5;"></div>
<div class="th" style="left:305.7px;width:212.8px;">备案号</div>
<div class="abs" style="left:305.2px;top:222px;width:1px;height:31.5px;background:#ebeef5;"></div>
<div class="th" style="left:518.5px;width:212.0px;">备案人中文</div>
<div class="abs" style="left:518.0px;top:222px;width:1px;height:31.5px;background:#ebeef5;"></div>
<div class="th" style="left:730.5px;width:212.7px;">状态</div>
<div class="abs" style="left:730.0px;top:222px;width:1px;height:31.5px;background:#ebeef5;"></div>
<div class="th" style="left:943.2px;width:81.8px;">详情</div>
<div class="abs" style="left:942.7px;top:222px;width:1px;height:31.5px;background:#ebeef5;"></div>
<div class="abs" style="left:42px;top:284.5px;width:985px;height:31.5px;background:#f6f9fd;"></div>
<div class="td" style="left:41.0px;top:263.3px;width:49.3px;">1</div>
<div class="td" style="left:90.3px;top:263.3px;width:217.0px;">壬二酸单酰胺丙基二甲胺</div>
<div class="td" style="left:307.3px;top:263.3px;width:213.0px;">国妆原备字<span style="letter-spacing:0">20230002</span></div>
<div class="td" style="left:520.3px;top:263.3px;width:213.1px;">新钰生技股份有限公司</div>
<div class="td" style="left:733.4px;top:263.3px;width:212.2px;">监测期</div>
<div class="dbtn" style="left:966px;top:260.0px;">详情</div>
<div class="abs" style="left:41px;top:284.0px;width:987px;height:1px;background:#ebeef5;"></div>
<div class="td" style="left:41.0px;top:294.3px;width:49.3px;">2</div>
<div class="td" style="left:90.3px;top:294.3px;width:217.0px;">驴油</div>
<div class="td" style="left:307.3px;top:294.3px;width:213.0px;">国妆原备字<span style="letter-spacing:0">20230001</span></div>
<div class="td" style="left:520.3px;top:294.3px;width:213.1px;">东阿阿胶股份有限公司</div>
<div class="td" style="left:733.4px;top:294.3px;width:212.2px;">监测期</div>
<div class="dbtn" style="left:966px;top:291.0px;">详情</div>
<div class="abs" style="left:41px;top:315.2px;width:987px;height:1px;background:#ebeef5;"></div>
<div class="td" style="left:41.0px;top:325.6px;width:49.3px;">3</div>
<div class="td" style="left:90.3px;top:325.6px;width:217.0px;">二氢燕麦生物碱D钾</div>
<div class="td" style="left:307.3px;top:325.6px;width:213.0px;">国妆原备字<span style="letter-spacing:0">20230003</span></div>
<div class="td" style="left:520.3px;top:325.6px;width:213.1px;">福州碧昂缇生物科技有限公司</div>
<div class="td" style="left:733.4px;top:325.6px;width:212.2px;">监测期</div>
<div class="dbtn" style="left:966px;top:322.2px;">详情</div>
<div class="abs" style="left:41px;top:346.8px;width:987px;height:1px;background:#ebeef5;"></div>
<div class="abs" style="left:89.8px;top:253.5px;width:1px;height:94px;background:#ebeef5;"></div>
<div class="abs" style="left:306.8px;top:253.5px;width:1px;height:94px;background:#ebeef5;"></div>
<div class="abs" style="left:519.8px;top:253.5px;width:1px;height:94px;background:#ebeef5;"></div>
<div class="abs" style="left:732.9px;top:253.5px;width:1px;height:94px;background:#ebeef5;"></div>
<div class="abs" style="left:945.1px;top:253.5px;width:1px;height:94px;background:#ebeef5;"></div>
<div class="t" style="left:350px;top:491px;font-size:13.5px;color:#0000ff;">说明</div>
<div class="abs" style="left:385px;top:486px;width:24px;height:22px;background:#f4f4f5;border-radius:2px;"></div>
<svg class="abs" style="left:391px;top:492px" width="10" height="10" viewBox="0 0 10 10"><path d="M6.5 1.5 L3 5 L6.5 8.5" fill="none" stroke="#c0c4cc" stroke-width="1"/></svg>
<div class="abs" style="left:417px;top:485.5px;width:24.5px;height:22.5px;background:#409eff;border-radius:2px;color:#fff;font-weight:bold;font-size:13px;text-align:center;line-height:22px;">1</div>
<div class="abs" style="left:450.5px;top:486px;width:24px;height:22px;background:#f4f4f5;border-radius:2px;"></div>
<svg class="abs" style="left:457.5px;top:492px" width="10" height="10" viewBox="0 0 10 10"><path d="M3.5 1.5 L7 5 L3.5 8.5" fill="none" stroke="#c0c4cc" stroke-width="1"/></svg>
<div class="t" style="left:479px;top:491px;font-size:12px;color:#606266;letter-spacing:-0.35px;">共 3 条</div>
<div class="abs" style="left:525.5px;top:485.5px;width:82.5px;height:22.5px;background:#fff;border:1px solid #dcdfe6;border-radius:3px;"></div>
<div class="t" style="left:542px;top:491.5px;font-size:12px;color:#606266;letter-spacing:-0.6px;">10条/页</div>
<svg class="abs" style="left:592px;top:492px" width="10" height="10" viewBox="0 0 10 10"><path d="M1.5 3.5 L5 7 L8.5 3.5" fill="none" stroke="#c0c4cc" stroke-width="1"/></svg>
<div class="t" style="left:639px;top:491.5px;font-size:12px;color:#606266;letter-spacing:-0.5px;">前往</div>
<div class="abs" style="left:664.5px;top:485.5px;width:37.5px;height:22.5px;background:#fff;border:1px solid #dcdfe6;border-radius:3px;font-size:12px;color:#606266;text-align:center;line-height:20px;">1</div>
<div class="t" style="left:705px;top:491.5px;font-size:12px;color:#606266;">页</div>
</body></html>
